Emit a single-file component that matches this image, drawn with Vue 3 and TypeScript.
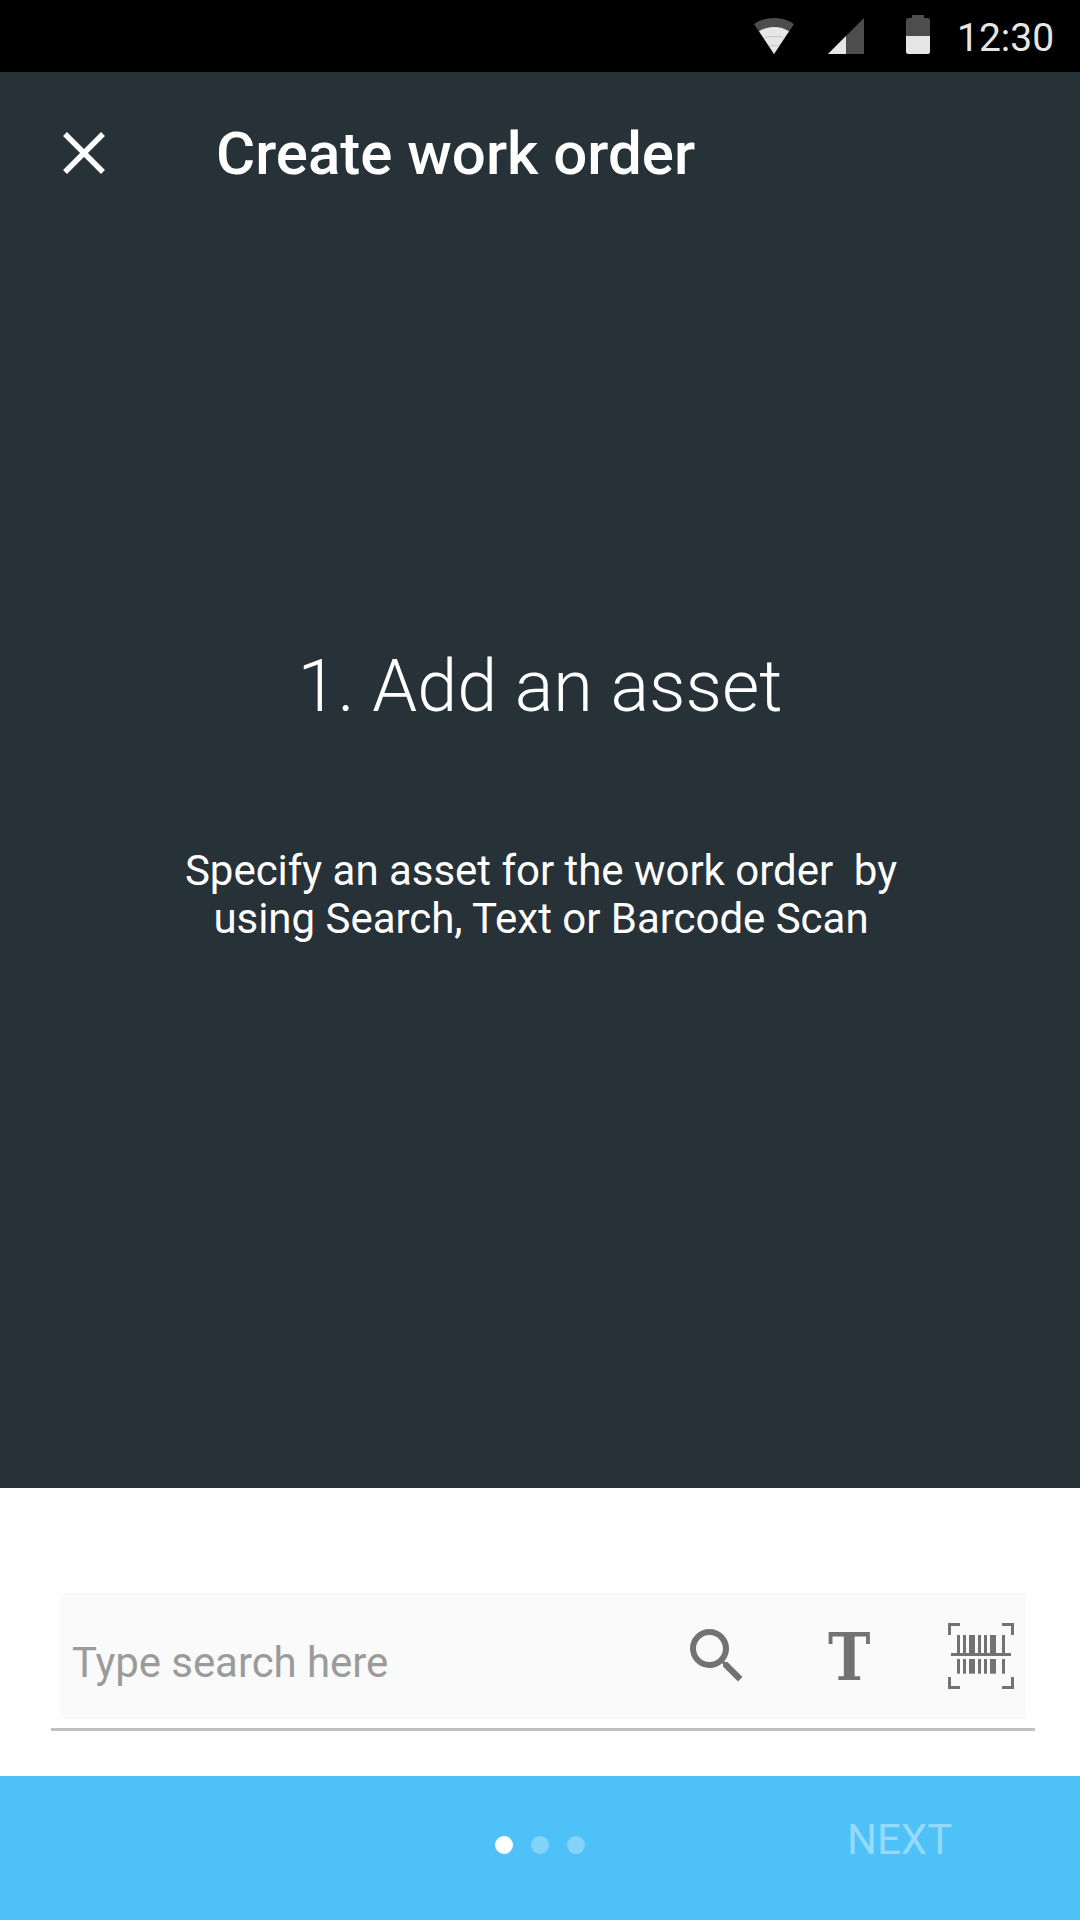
<script setup lang="ts">
import { ref } from 'vue'

interface Bar {
  x: number
  w: number
}

const query = ref<string>('')
const steps: number[] = [1, 2, 3]
const current = ref<number>(1)

const bars: Bar[] = [
  { x: 9, w: 3 },
  { x: 15, w: 3 },
  { x: 21, w: 6 },
  { x: 30, w: 3 },
  { x: 36, w: 3 },
  { x: 42, w: 6 },
  { x: 54, w: 3 },
]
</script>

<template>
  <div class="screen">
    <div class="status">
      <svg class="wifi" width="40" height="36" viewBox="0 0 40 36">
        <path d="M20 36 0 6.2C5.5 2.2 12.400 0 20 0s14.500 2.200 20 6.200z" fill="#4d4d4d" />
        <path d="M20 36 5 13.300C9.500 10.500 14.500 9 20 9s10.500 1.500 15 4.300z" fill="#e6e6e6" />
        <path d="M10.500 20.500Q12.500 18.500 16 18.500H24Q27.500 18.500 29.500 20.500M15.500 27.700H24.500" fill="none" stroke="#c4c4c4" stroke-width="1" />
      </svg>
      <svg class="signal" width="36" height="36" viewBox="0 0 36 36">
        <path d="M0 36 36 0V36z" fill="#4d4d4d" />
        <path d="M0 36 18 18V36z" fill="#e6e6e6" />
      </svg>
      <svg class="battery" width="24" height="39" viewBox="0 0 24 39">
        <path d="M6 0h12v3h3.500A2.500 2.500 0 0 1 24 5.500V21H0V5.500A2.500 2.500 0 0 1 2.500 3H6z" fill="#4d4d4d" />
        <path d="M0 21h24v15.500a2.500 2.500 0 0 1-2.500 2.500h-19A2.500 2.500 0 0 1 0 36.500z" fill="#e6e6e6" />
      </svg>
      <span class="time">12:30</span>
    </div>

    <header class="bar">
      <svg class="close" width="42" height="42" viewBox="0 0 42 42">
        <path d="M2 2 40 40M40 2 2 40" fill="none" stroke="#fff" stroke-width="5.500" />
      </svg>
      <h1 class="title">Create work order</h1>
    </header>

    <main class="intro">
      <h2 class="heading">1. Add an asset</h2>
      <p class="hint">Specify an asset for the work order&nbsp; by<br />using Search, Text or Barcode Scan</p>
    </main>

    <section class="search">
      <div class="field">
        <div class="inner">
          <input v-model="query" class="input" type="text" placeholder="Type search here" />
          <svg class="lens" width="72" height="72" viewBox="0 0 24 24">
            <path d="M15.500 14h-.79l-.28-.27A6.471 6.471 0 0 0 16 9.500 6.500 6.500 0 1 0 9.500 16c1.610 0 3.090-.59 4.230-1.570l.27.28v.79l5 4.990L20.490 19l-4.990-5zm-6 0C7.010 14 5 11.990 5 9.500S7.010 5 9.500 5 14 7.010 14 9.500 11.990 14 9.500 14z" fill="#727272" />
          </svg>
          <span class="letter">T</span>
          <svg class="scan" width="66" height="66" viewBox="0 0 66 66" fill="#727272">
            <path d="M0 0H12V3H3V12H0zM54 0H66V12H63V3H54zM0 54H3V63H12V66H0zM63 54H66V66H54V63H63z" />
            <rect x="3" y="30" width="60" height="3" />
            <g v-for="b in bars" :key="b.x">
              <rect :x="b.x" y="12" :width="b.w" height="18" />
              <rect :x="b.x" y="36" :width="b.w" height="14.700" />
            </g>
          </svg>
        </div>
      </div>
    </section>

    <footer class="footer">
      <div class="dots">
        <span v-for="s in steps" :key="s" class="dot" :class="{ active: s === current }"></span>
      </div>
      <button class="next" type="button">NEXT</button>
    </footer>
  </div>
</template>

<style>
body {
  margin: 0;
}
</style>

<style scoped>
.screen {
  display: flex;
  flex-direction: column;
  width: 1080px;
  height: 1920px;
  overflow: hidden;
  background: #fff;
  font-family: Roboto, "Liberation Sans", sans-serif;
}

.status {
  box-sizing: border-box;
  display: flex;
  align-items: flex-start;
  justify-content: flex-end;
  height: 72px;
  padding-right: 26px;
  background: #000;
}

.wifi {
  margin: 18px 34px 0 0;
}

.signal {
  margin: 18px 42px 0 0;
}

.battery {
  margin: 15px 27px 0 0;
}

.time {
  width: 97px;
  margin-top: 15px;
  color: #e6e6e6;
  font-size: 39px;
  line-height: 46px;
  white-space: nowrap;
}

.bar {
  display: flex;
  align-items: center;
  height: 168px;
  padding-left: 63px;
  background: #273238;
}

.close {
  margin-bottom: 6px;
}

.title {
  margin: 0 0 4px 111px;
  color: #fff;
  font-size: 60px;
  font-weight: 500;
  line-height: 72px;
}

.intro {
  box-sizing: border-box;
  height: 1248px;
  padding-top: 405px;
  background: #273238;
  color: #fff;
  text-align: center;
}

.heading {
  margin: 0;
  font-size: 72px;
  font-weight: 300;
  line-height: 84px;
}

.hint {
  margin: 118px 0 0 2px;
  font-size: 42px;
  letter-spacing: -0.03px;
  line-height: 48px;
}

.search {
  box-sizing: border-box;
  height: 288px;
  padding: 97px 45px 0 51px;
}

.field {
  box-sizing: border-box;
  height: 146px;
  padding: 8px 9px;
  border-bottom: 3px solid #c1c1c1;
  background: #fefefe;
}

.inner {
  display: flex;
  align-items: flex-start;
  height: 126px;
  background: #fafafa;
}

.input {
  box-sizing: border-box;
  width: 621px;
  height: 49px;
  margin: 45px 0 0;
  padding: 0 0 0 12px;
  border: 0;
  outline: 0;
  background: transparent;
  color: #333;
  font-family: inherit;
  font-size: 42px;
  letter-spacing: -0.08px;
}

.input::placeholder {
  color: #9b9b9b;
  opacity: 1;
}

.lens {
  flex: none;
  margin-top: 27px;
}

.letter {
  width: 44px;
  margin: 25px 0 0 74px;
  color: #727272;
  font-family: "DejaVu Serif Condensed", "DejaVu Serif", serif;
  font-size: 66px;
  font-weight: 700;
  font-stretch: condensed;
  line-height: 78px;
  transform: scaleX(0.96);
}

.scan {
  flex: none;
  margin: 30px 0 0 77px;
}

.footer {
  display: grid;
  grid-template-columns: 495px 90px auto;
  height: 144px;
  background: #4fc1f9;
}

.dots {
  display: flex;
  grid-column: 2;
  gap: 18px;
  padding-top: 60px;
}

.dot {
  width: 18px;
  height: 18px;
  border-radius: 50%;
  background: #84d4fa;
}

.dot.active {
  background: #fff;
}

.next {
  justify-self: start;
  align-self: start;
  margin: 40px 0 0 262px;
  padding: 0;
  border: 0;
  background: transparent;
  color: #95dafb;
  font-family: inherit;
  font-size: 42px;
  line-height: 48px;
}
</style>
